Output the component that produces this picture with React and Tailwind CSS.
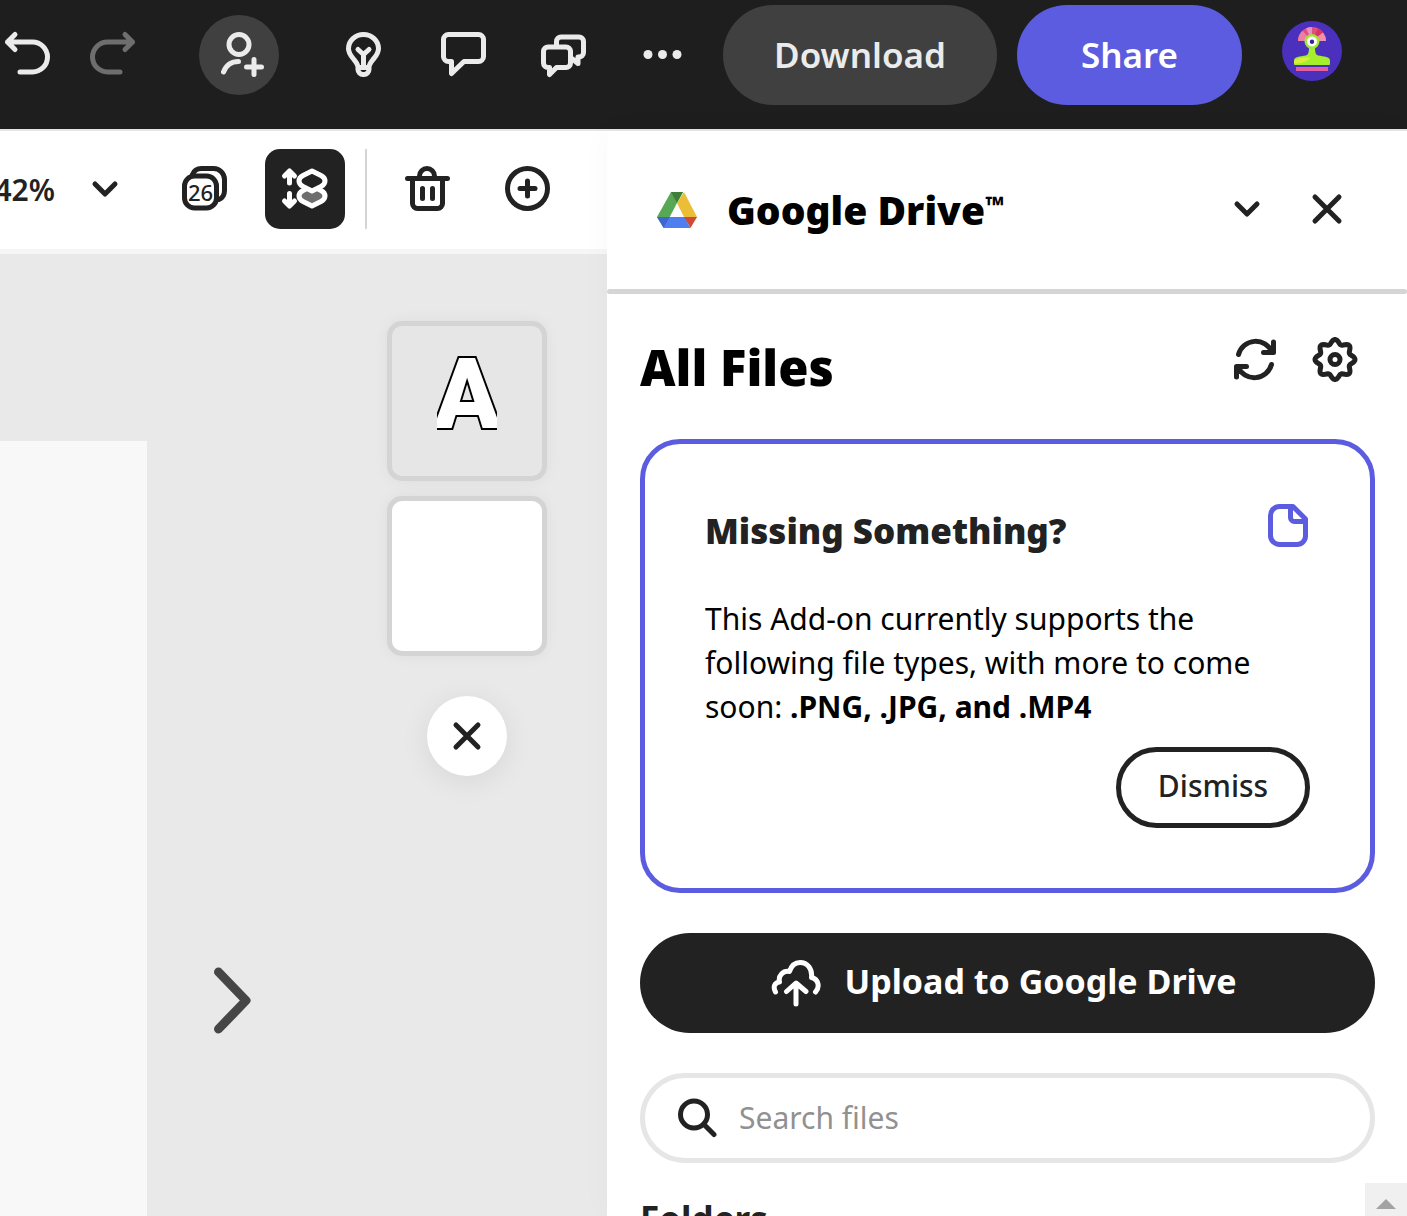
import React, { useState } from 'react';

const Svg = ({ className = 'w-[50px] h-[50px]', box = '0 0 50 50', children }) => (
    <svg
        className={`shrink-0 ${className}`}
        viewBox={box}
        fill="none"
        stroke="currentColor"
        strokeWidth="5"
        strokeLinecap="round"
        strokeLinejoin="round"
        aria-hidden="true"
    >
        {children}
    </svg>
);

const IconButton = ({ label, className = '', children, ...rest }) => (
    <button aria-label={label} className={`w-20 h-20 shrink-0 flex items-center justify-center ${className}`} {...rest}>
        {children}
    </button>
);

const ChevronDown = () => (
    <Svg className="w-10 h-10" box="0 0 40 40">
        <path d="M10 15 20 25 30 15" />
    </Svg>
);

const Cross = () => (
    <Svg className="w-10 h-10" box="0 0 40 40">
        <path d="M9 9 31 31M31 9 9 31" />
    </Svg>
);

// eight rounded teeth
const gearPoints = Array.from({ length: 96 }, (_, i) => {
    const a = (i * Math.PI) / 48;
    const r = 17.8 + 2.2 * Math.cos(8 * a);
    return `${(25 + r * Math.cos(a)).toFixed(2)},${(24.5 + r * Math.sin(a)).toFixed(2)}`;
}).join(' ');

const Avatar = () => (
    <svg className="w-[60px] h-[60px]" viewBox="0 0 60 60" aria-hidden="true">
        <circle cx="30" cy="30" r="30" fill="#4a30bd" />
        <path d="M16 20a14 14 0 0 1 28 0z" fill="#e2507f" />
        <path d="M16 20a14 14 0 0 1 4.500-10.300L30 20z" fill="#ec7fa6" />
        <path d="M24 7.400A14 14 0 0 1 30 6v14z" fill="#e88fc4" />
        <path d="M36 7.400a14 14 0 0 1 5 4L30 20z" fill="#d8365f" />
        <path d="M41 11.400a14 14 0 0 1 3 8.600H30z" fill="#ef8fb4" />
        <path d="M27 25h6c0 6 .5 8.500 3 9.500 6 .8 12 1.500 12 5V43a1 1 0 0 1-1 1H13a1 1 0 0 1-1-1v-3.500c0-3.500 6-4.200 12-5 2.500-1 3-3.500 3-9.500z" fill="#a5ee2c" />
        <path d="M12 40c4-3 10-4 16-3.500-2 4-8 6-16 6z" fill="#d8f03c" />
        <circle cx="30" cy="20.500" r="7.500" fill="#a2e43a" />
        <circle cx="30" cy="20.500" r="5" fill="#fff" />
        <circle cx="30" cy="20.800" r="2.200" fill="#35249a" />
        <path d="M14 46h32v4H14z" fill="#e0609f" />
    </svg>
);

const TopBar = () => (
    <header className="h-[129px] shrink-0 flex items-start justify-end gap-5 pt-[5px] pr-[65px] bg-[#1e1e1e] text-[#ebebeb]">
        <div className="h-[100px] flex items-center gap-5">
            <div className="flex items-center gap-[6px] mr-6">
                <IconButton label="Undo">
                    <Svg><path d="M13 4.500 5.500 12 13 19.500M5.500 12H30.500a15 15 0 0 1 0 30H18" /></Svg>
                </IconButton>
                <IconButton label="Redo" className="text-[#6e6e6e]">
                    <Svg><path d="M37 4.500 44.500 12 37 19.500M44.500 12H19.500a15 15 0 0 0 0 30H32" /></Svg>
                </IconButton>
                <IconButton label="Invite" className="ml-10 rounded-full bg-[#404040]">
                    <Svg>
                        <circle cx="25" cy="14.500" r="10" />
                        <path d="M9.500 42C12 35.500 17 31.500 24.500 31.500M40 29.500v15M32.500 37h15" />
                    </Svg>
                </IconButton>
            </div>
            <IconButton label="Ideas">
                <Svg>
                    <path d="M20 37.500c0-3.500-2-5.500-4.500-8.500-3-3.500-5-6.500-5-10.500a15 14 0 0 1 30 0c0 4-2 7-5 10.500-2.500 3-4.500 5-4.500 8.500v2a5 5 0 0 1-5 5h-1a5 5 0 0 1-5-5z" />
                    <path d="M25.500 37V24M20 19.500l5.500 5 5.500-5M21 37.500h9" />
                </Svg>
            </IconButton>
            <IconButton label="Comments">
                <Svg><path d="M10.500 4.500h30a5 5 0 0 1 5 5v17a5 5 0 0 1-5 5H26L13.500 43.500v-12h-3a5 5 0 0 1-5-5v-17a5 5 0 0 1 5-5z" /></Svg>
            </IconButton>
            <IconButton label="Discussions">
                <Svg>
                    <path d="M18.500 16.500V11.500a4.500 4.500 0 0 1 4.500-4.500h18a4.500 4.500 0 0 1 4.500 4.500v11a4.500 4.500 0 0 1-4.500 4.500H40v6.500L34.500 29" />
                    <path d="M10 17h18a4.500 4.500 0 0 1 4.500 4.500v11.500a4.500 4.500 0 0 1-4.500 4.500h-9.500L11.500 44.500v-7H10a4.500 4.500 0 0 1-4.500-4.500v-11.500a4.500 4.500 0 0 1 4.500-4.500z" />
                </Svg>
            </IconButton>
            <IconButton label="More">
                <Svg>
                    <g fill="currentColor" stroke="none">
                        <circle cx="10" cy="24.500" r="4.500" />
                        <circle cx="24.500" cy="24.500" r="4.500" />
                        <circle cx="39" cy="24.500" r="4.500" />
                    </g>
                </Svg>
            </IconButton>
            <button className="w-[274px] h-[100px] shrink-0 rounded-full bg-[#404040] text-[35px] font-semibold">Download</button>
            <button className="w-[225px] h-[100px] shrink-0 rounded-full bg-[#5c5ce0] text-white text-[35px] font-semibold">Share</button>
        </div>
        <button aria-label="Account" className="mt-4 ml-5 shrink-0 rounded-full">
            <Avatar />
        </button>
    </header>
);

const ToolBar = () => (
    <div className="shrink-0 flex items-center justify-end gap-5 pt-[18px] pb-5 pr-10 bg-white border-b-[5px] border-[#f6f6f6] box-content h-20 text-[#222]">
        <button className="flex items-center gap-[30px] mr-5 shrink-0 text-[30px] font-semibold">
            42%
            <ChevronDown />
        </button>
        <IconButton label="Pages">
            <Svg>
                <path d="M12.500 10.500C14 6.500 17 4.500 21.500 4.500h12a11 11 0 0 1 11 11v11c0 4.500-2 7.500-5.500 9" />
                <rect x="4.500" y="12" width="32" height="32" rx="10" />
                <text x="20.500" y="37" textAnchor="middle" fontSize="22" fontWeight="500" fill="currentColor" stroke="none">26</text>
            </Svg>
        </IconButton>
        <IconButton label="Layers" className="rounded-[15px] bg-[#222] text-white">
            <Svg>
                <path d="M9.500 19V7.500M4.500 12l5-5 5 5M9.500 29.500V41M4.500 37l5 5 5-5" />
                <path d="M32 22l9 4.500c3 1.500 4 3 4 5.500s-1 4-4 5.500L32 42l-9-4.500c-3-1.500-4-3-4-5.500s1-4 4-5.500z" fill="#6e6e6e" />
                <path d="M32 7l9 4.500c3 1.500 4 3 4 5.500s-1 4-4 5.500L32 27l-9-4.500c-3-1.500-4-3-4-5.500s1-4 4-5.500z" fill="#222" />
            </Svg>
        </IconButton>
        <div className="w-[2px] h-20 shrink-0 bg-[#d5d5d5]"></div>
        <IconButton label="Delete">
            <Svg>
                <path d="M5.500 14.500h40M17.500 14.500V12a7.500 7.500 0 0 1 15 0v2.500M10.500 14.500V39.500a5 5 0 0 0 5 5h20a5 5 0 0 0 5-5v-25M20.500 24.500v10M30.500 24.500v10" />
            </Svg>
        </IconButton>
        <IconButton label="Add page">
            <Svg>
                <circle cx="25.500" cy="24.500" r="20" />
                <path d="M25.500 17v15M18 24.500h15" />
            </Svg>
        </IconButton>
    </div>
);

const Stage = () => (
    <div className="flex-1 min-h-0 flex bg-[#e9e9e9]">
        <div className="flex-1 mt-[187px] bg-[#f8f8f8]"></div>
        <div className="w-60 shrink-0 pt-[713px] pl-[66px]">
            <button aria-label="Next page" className="block text-[#464646]">
                <svg className="w-[38px] h-[67px]" viewBox="0 0 38 67" fill="none" stroke="currentColor" strokeWidth="9" strokeLinecap="round" strokeLinejoin="round" aria-hidden="true">
                    <path d="M5.500 5 33 33.500 5.500 62" />
                </svg>
            </button>
        </div>
        <div className="shrink-0 flex flex-col items-center gap-[15px] pt-[67px] pr-[60px]">
            <button aria-label="Text layer" className="w-40 h-40 flex justify-center pt-6 rounded-[15px] border-[5px] border-[#d4d4d4] bg-[#e6e6e6] shadow-[0_0_15px_rgba(0,0,0,0.05)]">
                <span className="w-[60px] h-[90px] overflow-hidden flex justify-center font-[Roboto,sans-serif] text-[98px] leading-[90px] font-black text-white [-webkit-text-stroke:4px_black] [paint-order:stroke_fill]">A</span>
            </button>
            <button aria-label="Background layer" className="w-40 h-40 rounded-[15px] border-[5px] border-[#d4d4d4] bg-white shadow-[0_0_15px_rgba(0,0,0,0.05)]"></button>
            <IconButton label="Close layers" className="mt-[25px] rounded-full bg-white text-[#222] shadow-[0_5px_30px_rgba(0,0,0,0.08)]">
                <Cross />
            </IconButton>
        </div>
    </div>
);

const DrivePanel = () => {
    const [dismissed, setDismissed] = useState(false);
    const [query, setQuery] = useState('');

    return (
        <aside className="relative z-10 w-[800px] shrink-0 flex flex-col bg-white text-[#222] shadow-[0_0_30px_rgba(0,0,0,0.03)]">
            <div className="h-[158px] shrink-0 flex items-center pl-[50px] pr-10">
                <svg className="w-10 h-9 mr-[30px]" viewBox="0 0 40 36" aria-hidden="true">
                    <path d="M14 0h12l-6 11-13 25L0 25z" fill="#57a854" />
                    <path d="M14 0h12l-6 11z" fill="#3f7d38" />
                    <path d="M27 0 40 25H27L20 11z" fill="#ecbd36" />
                    <path d="M7 25h26l-5 11H7z" fill="#4f7ef0" />
                    <path d="M0 25h13L6.500 36z" fill="#3f65d0" />
                    <path d="M27 25h13l-6.500 11z" fill="#cf4b35" />
                    <path d="M6.500 36 13 25h14l6.500 11z" fill="#4f7ef0" />
                    <path d="M20 13.500 26.500 25h-13z" fill="#fff" />
                </svg>
                <h1 className="flex-1 flex items-start text-[39px] leading-[50px] font-black text-black">
                    Google Drive
                    <span className="text-[24px] leading-10">™</span>
                </h1>
                <div className="flex pb-[3px]">
                    <IconButton label="Collapse">
                        <ChevronDown />
                    </IconButton>
                    <IconButton label="Close panel">
                        <Svg className="w-10 h-10" box="0 0 40 40"><path d="M8 8 32 32M32 8 8 32" /></Svg>
                    </IconButton>
                </div>
            </div>
            <div className="h-[5px] shrink-0 rounded-full bg-[#d5d5d5]"></div>

            <div className="pl-[33px] pr-8">
                <div className="h-[145px] flex items-center justify-between">
                    <h2 className="text-[49px] leading-[60px] font-black text-black">All Files</h2>
                    <div className="flex pb-[14px]">
                        <IconButton label="Refresh">
                            <Svg>
                                <path d="M8.500 19.500A17.800 17.800 0 0 1 42 17M43.500 7v10.500H33.500" />
                                <path d="M8.500 19.500A17.800 17.800 0 0 1 42 17M43.500 7v10.500H33.500" transform="rotate(180 25 24.500)" />
                            </Svg>
                        </IconButton>
                        <IconButton label="Settings">
                            <Svg>
                                <polygon points={gearPoints} />
                                <circle cx="25" cy="24.500" r="5" />
                            </Svg>
                        </IconButton>
                    </div>
                </div>

                {!dismissed && (
                    <section className="mb-10 rounded-[40px] border-[5px] border-[#5c5ce0] px-[60px] pt-14 pb-[60px]">
                        <div className="flex items-start justify-between">
                            <h3 className="text-[35px] leading-[62px] font-black">Missing Something?</h3>
                            <Svg className="w-[45px] h-[50px] text-[#5c5ce0]" box="0 0 45 50">
                                <path d="M14.500 6.500H28L40.500 19V36a8.500 8.500 0 0 1-8.500 8.500H14.500A9 9 0 0 1 5.500 36V15.500a9 9 0 0 1 9-9zM25.500 6.500V17.500a4 4 0 0 0 4 4h11" />
                            </Svg>
                        </div>
                        <p className="mt-[35px] text-[30px] leading-[44px] text-black">
                            This Add-on currently supports the following file types, with more to come soon: <b className="font-bold">.PNG, .JPG, and .MP4</b>
                        </p>
                        <div className="mt-[18px] flex justify-end">
                            <button onClick={() => setDismissed(true)} className="w-[194px] h-[81px] pb-1 rounded-full border-[5px] border-[#222] text-[30px] font-medium">Dismiss</button>
                        </div>
                    </section>
                )}

                <button className="w-full h-[100px] flex items-center justify-center gap-6 pr-2 rounded-full bg-[#222] text-white text-[34px] font-bold">
                    <Svg>
                        <path d="M4.500 34C1.500 28.500 4 24.500 8.500 24 7 17.500 12 12.500 18.500 13.500 20.500 7.500 24 4.500 29 4.500 36.500 4.500 41.500 11 40.500 19.500 47 21 49.500 28.500 44.500 34M25 46V26M15.500 33.500 25 25 35 33.500" />
                    </Svg>
                    <span className="pb-[3px]">Upload to Google Drive</span>
                </button>

                <label className="mt-10 h-[90px] flex items-center gap-[22px] pl-8 pr-8 rounded-full border-[5px] border-[#e6e6e6]">
                    <Svg className="w-10 h-10" box="0 0 40 40">
                        <circle cx="17" cy="16.500" r="13.500" />
                        <path d="M27.500 27 37 36.500" />
                    </Svg>
                    <input
                        type="text"
                        aria-label="Search files"
                        value={query}
                        onChange={e => setQuery(e.target.value)}
                        placeholder="Search files"
                        className="flex-1 min-w-0 bg-transparent text-[30px] leading-[44px] placeholder:text-[#919191] focus:outline-none"
                    />
                </label>
            </div>

            <div className="mt-5 flex-1 min-h-0 overflow-hidden flex justify-between pl-[33px]">
                <h3 className="pt-[14px] text-[35px] leading-[44px] font-bold">Folders</h3>
                <button aria-label="Scroll up" className="w-[42px] h-[42px] flex items-center justify-center bg-[#f0f0f0] text-[#a3a3a3]">
                    <svg className="w-5 h-[10px]" viewBox="0 0 20 10" fill="currentColor" aria-hidden="true">
                        <path d="M10 0 20 10H0z" />
                    </svg>
                </button>
            </div>
        </aside>
    );
};

const App = () => {
    return (
        <div className="h-screen flex flex-col overflow-hidden bg-white font-['Noto_Sans','Open_Sans',sans-serif]">
            <TopBar />
            <div className="flex-1 min-h-0 flex border-t-2 border-[#e6e6e6]">
                <main className="flex-1 min-w-0 flex flex-col overflow-hidden">
                    <ToolBar />
                    <Stage />
                </main>
                <DrivePanel />
            </div>
        </div>
    );
};

export default App;
